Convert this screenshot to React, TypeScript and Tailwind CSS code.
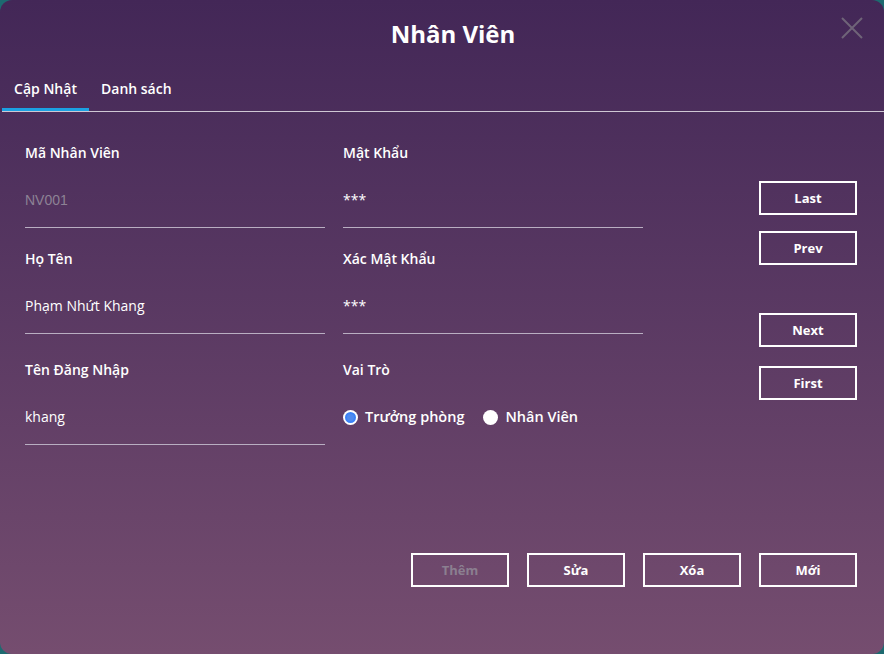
import { useState } from 'react'

const Field = ({ label, value, muted }: { label: string; value: string; muted?: boolean }) => {
    return (
        <div className="w-[300px]">
            <div className="h-[24px] text-[14px] font-semibold text-white leading-[24px]">{label}</div>
            <div
                className={
                    'mt-[21px] h-[28px] leading-[28px] text-[14px] ' +
                    (muted ? 'text-[#8d8295] font-["Liberation_Sans",sans-serif]' : 'text-white')
                }
            >
                {value}
            </div>
            <div className="mt-[13px] h-px bg-[#b9aec2]"></div>
        </div>
    )
}

const Btn = ({ label, disabled }: { label: string; disabled?: boolean }) => {
    return (
        <button
            className={
                'w-[98px] h-[34px] pt-[2px] border-2 border-white text-[13px] font-bold ' +
                (disabled ? 'text-[#8b7f90]' : 'text-white')
            }
        >
            {label}
        </button>
    )
}

const Radio = ({ label, checked, onClick }: { label: string; checked: boolean; onClick: () => void }) => {
    return (
        <label className="flex items-center gap-[7px]" onClick={onClick}>
            <span className="w-[15px] h-[15px] rounded-full bg-white flex items-center justify-center">
                {checked && <span className="w-[11px] h-[11px] rounded-full border-2 border-[#3b82f6] bg-[#4f8bf0]"></span>}
            </span>
            {label}
        </label>
    )
}

const App = () => {
    const [tab, setTab] = useState(0)
    const [role, setRole] = useState('tp')

    return (
        <div className="w-[884px] h-[654px] bg-[#1d6a70] font-['Open_Sans',sans-serif]">
            <div className="relative w-full h-full rounded-[12px] overflow-hidden bg-gradient-to-b from-[#432757] to-[#754d6f] flex flex-col">
                <h1 className="pt-[18px] pl-[22px] h-[68px] text-center text-[24px] font-bold text-white leading-[32px]">Nhân Viên</h1>
                <button className="absolute right-[20px] top-[16px] w-[24px] h-[24px]">
                    <svg viewBox="0 0 24 24" width="24" height="24" stroke="#6f6478" strokeWidth="2" fill="none">
                        <path d="M2 2L22 22M22 2L2 22" />
                    </svg>
                </button>

                {/* tabs */}
                <div className="ml-[2px] flex border-b border-[#cfc7d4]">
                    <button
                        onClick={() => setTab(0)}
                        className={
                            'w-[87px] h-[43px] pt-[1px] text-[14px] font-semibold text-white border-b-[3px] ' +
                            (tab === 0 ? 'border-[#1ba1e2]' : 'border-transparent')
                        }
                    >
                        Cập Nhật
                    </button>
                    <button
                        onClick={() => setTab(1)}
                        className={
                            'px-[12px] h-[43px] pt-[1px] text-[14px] font-semibold text-white border-b-[3px] ' +
                            (tab === 1 ? 'border-[#1ba1e2]' : 'border-transparent')
                        }
                    >
                        Danh sách
                    </button>
                </div>

                <div className="flex pl-[25px] pt-[29px]">
                    <div className="flex flex-col gap-[19px]">
                        <Field label="Mã Nhân Viên" value="NV001" muted />
                        <Field label="Họ Tên" value="Phạm Nhứt Khang" />
                        <div className="w-[300px] mt-[5px]">
                            <div className="h-[24px] text-[14px] font-semibold text-white leading-[24px]">Tên Đăng Nhập</div>
                            <div className="mt-[21px] h-[28px] leading-[28px] text-[14px] text-white">khang</div>
                            <div className="mt-[13px] h-px bg-[#b9aec2]"></div>
                        </div>
                    </div>
                    <div className="ml-[18px] flex flex-col gap-[19px]">
                        <Field label="Mật Khẩu" value="***" />
                        <Field label="Xác Mật Khẩu" value="***" />
                        <div className="w-[300px] mt-[5px]">
                            <div className="h-[24px] text-[14px] font-semibold text-white leading-[24px]">Vai Trò</div>
                            <div className="mt-[21px] h-[28px] flex items-center gap-[19px] text-[14.5px] font-semibold text-white">
                                <Radio label="Trưởng phòng" checked={role === 'tp'} onClick={() => setRole('tp')} />
                                <Radio label="Nhân Viên" checked={role === 'nv'} onClick={() => setRole('nv')} />
                            </div>
                        </div>
                    </div>
                    <div className="ml-[116px] pt-[40px] flex flex-col">
                        <Btn label="Last" />
                        <div className="mt-[16px]"><Btn label="Prev" /></div>
                        <div className="mt-[48px]"><Btn label="Next" /></div>
                        <div className="mt-[19px]"><Btn label="First" /></div>
                    </div>
                </div>

                <div className="mt-auto mb-[67px] pr-[27px] flex justify-end gap-[18px]">
                    <Btn label="Thêm" disabled />
                    <Btn label="Sửa" />
                    <Btn label="Xóa" />
                    <Btn label="Mới" />
                </div>
            </div>
        </div>
    )
}

export default App
